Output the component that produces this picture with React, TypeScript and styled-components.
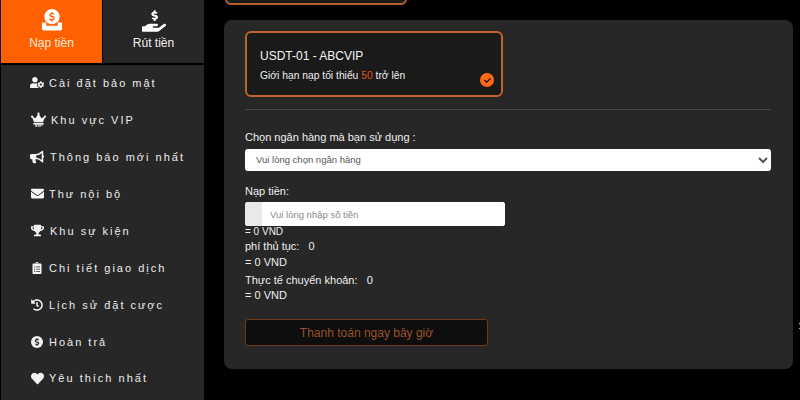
import React from "react";
import styled, { createGlobalStyle } from "styled-components";
import {
  FaBullhorn,
  FaCheck,
  FaClipboardList,
  FaCrown,
  FaDollarSign,
  FaEnvelope,
  FaHandHoldingUsd,
  FaHeart,
  FaHistory,
  FaTrophy,
  FaUserCog,
} from "react-icons/fa";

const GlobalStyle = createGlobalStyle`
  html, body {
    margin: 0;
    background: #000;
    overflow: hidden;
  }
  * {
    box-sizing: border-box;
  }
`;

const Page = styled.div`
  position: relative;
  width: 800px;
  height: 400px;
  display: flex;
  overflow: hidden;
  background: #000;
  color: #f2f2f2;
  font-family: "Liberation Sans", Arial, sans-serif;
`;

const Sidebar = styled.aside`
  width: 203px;
  margin-left: 1px;
  flex-shrink: 0;
  display: flex;
  flex-direction: column;
  gap: 2px;
`;

const Tabs = styled.div`
  height: 63px;
  display: flex;
  gap: 1px;
`;

const Tab = styled.div<{ $active?: boolean }>`
  flex: 1;
  display: flex;
  flex-direction: column;
  align-items: center;
  padding-top: 9px;
  gap: 5px;
  font-size: 12px;
  background: ${(p) => (p.$active ? "#ff6000" : "#272727")};
  color: ${(p) => (p.$active ? "#ffe9dc" : "#f2f2f2")};
`;

const TabIcon = styled.div`
  height: 22px;
  font-size: 24px;
  line-height: 0;
  color: #fff;
`;

const Menu = styled.nav`
  flex: 1;
  background: #272727;
`;

const MenuItem = styled.div<{ $gap?: number }>`
  height: 36.95px;
  display: flex;
  align-items: center;
  padding: 0 0 1px 29px;
  gap: ${(p) => p.$gap ?? 5}px;
  font-size: 11px;
  letter-spacing: 2px;
  color: #ececec;
  white-space: nowrap;
`;

const MenuIcon = styled.span`
  width: 14px;
  display: flex;
  justify-content: center;
  font-size: 13px;
  color: #f4f4f4;
`;

const Coin = styled.span`
  width: 12px;
  height: 12px;
  display: flex;
  align-items: center;
  justify-content: center;
  border-radius: 50%;
  background: #f4f4f4;
  color: #272727;
  font-size: 8px;
`;

const Crown = styled.span`
  width: 15px;
  margin-left: 1px;
  display: flex;
  flex-direction: column;
  align-items: center;
  font-size: 15px;
  line-height: 1;
  color: #f4f4f4;
`;

const CrownLabel = styled.span`
  font-size: 5px;
  font-weight: 700;
  letter-spacing: 0;
  margin-top: -3px;
`;

const Content = styled.main`
  flex: 1;
  display: flex;
  flex-direction: column;
  padding: 0 8px 0 20px;
`;

const ClippedCard = styled.div`
  width: 182px;
  height: 40px;
  margin: -35px 0 0 1px;
  flex-shrink: 0;
  background: #1a1a1a;
  border: 2px solid #b8602e;
  border-radius: 6px;
`;

const Panel = styled.section`
  margin-top: 15px;
  height: 349px;
  background: #272727;
  border-radius: 8px;
  padding: 11px 22px 0 21px;
  color: #f0f0f0;
`;

const BankCard = styled.div`
  position: relative;
  width: 258px;
  height: 66px;
  padding: 15px 13px 0;
  background: #1a1a1a;
  border: 2px solid #c0622c;
  border-radius: 6px;
`;

const BankName = styled.div`
  font-size: 12px;
  line-height: 17px;
  color: #f4f4f4;
`;

const BankLimit = styled.div`
  margin-top: 4px;
  font-size: 10.3px;
  line-height: 13px;
  color: #eee;
`;

const Accent = styled.span`
  color: #e0521c;
`;

const CheckBadge = styled.span`
  position: absolute;
  right: 7px;
  bottom: 8px;
  width: 14px;
  height: 14px;
  display: flex;
  align-items: center;
  justify-content: center;
  border-radius: 50%;
  background: #ff6a13;
  color: #2a1a10;
  font-size: 7px;
`;

const Divider = styled.hr`
  height: 1px;
  margin: 12px 0 0;
  border: 0;
  background: #474747;
`;

const FieldLabel = styled.div`
  margin-top: 20px;
  font-size: 11px;
  line-height: 14px;
`;

const BankSelect = styled.select`
  display: block;
  width: 526px;
  height: 22.5px;
  margin-top: 4.5px;
  padding: 0 0 0 7px;
  border: 0;
  border-radius: 3px;
  background: #fff;
  color: #555;
  font-family: inherit;
  font-size: 9.5px;
`;

const AmountLabel = styled(FieldLabel)`
  margin-top: 13px;
`;

const AmountGroup = styled.div`
  display: flex;
  width: 260px;
  height: 24px;
  margin-top: 4px;
  border-radius: 3px;
  overflow: hidden;
  background: #fff;
`;

const Addon = styled.span`
  width: 17px;
  background: #e9e9e9;
`;

const AmountInput = styled.input`
  flex: 1;
  min-width: 0;
  border: 0;
  outline: 0;
  padding: 0 8px;
  font-family: inherit;
  font-size: 9.5px;
  color: #333;

  &::placeholder {
    color: #8a8a8a;
    opacity: 1;
  }
`;

const Line = styled.div<{ $gap?: number; $small?: boolean }>`
  margin-top: ${(p) => p.$gap ?? 0}px;
  font-size: ${(p) => (p.$small ? 10 : 11)}px;
  line-height: ${(p) => (p.$small ? 12 : 14)}px;
  color: #efefef;
  white-space: pre;
`;

const PayButton = styled.button`
  display: block;
  width: 243px;
  height: 27px;
  margin-top: 17px;
  background: #0e0e0e;
  border: 1px solid #6e3a1e;
  border-radius: 3px;
  color: #9a5029;
  font-family: inherit;
  font-size: 12px;
`;

const EdgeMark = styled.span`
  position: absolute;
  right: -1px;
  top: 319px;
  font-size: 11px;
  color: #ddd;
`;

const DepositIcon = () => (
  <svg width="22" height="22" viewBox="0 0 22 23" fill="#fff">
    <path
      fillRule="evenodd"
      d="M11 0a8 8 0 1 1 0 16a8 8 0 1 1 0-16zM10.3 3v1.1c-1.3.2-2.2 1.1-2.2 2.3 0 1.4 1 1.9 2.2 2.2l.9.3c.8.2 1.1.5 1.1.9 0 .5-.5.9-1.3.9-.8 0-1.6-.4-2.2-.9l-.8 1.1c.6.6 1.3.9 2.1 1.1V13h1.4v-1.1c1.4-.2 2.3-1.1 2.3-2.4s-.9-1.9-2.2-2.3l-.9-.3c-.7-.2-1.1-.4-1.1-.8 0-.5.5-.8 1.1-.8.7 0 1.3.3 1.8.7l.8-1.1c-.6-.5-1.2-.8-1.9-.9V3z"
    />
    <path d="M1.5 14H5v3.5h12V14h3.5a1 1 0 0 1 1 1v6a1.5 1.5 0 0 1-1.5 1.5H2A1.5 1.5 0 0 1 .5 21v-6a1 1 0 0 1 1-1z" />
  </svg>
);

const menu = [
  { icon: <FaBullhorn size={14} />, label: "Thông báo mới nhất", gap: 6 },
  { icon: <FaEnvelope />, label: "Thư nội bộ", gap: 5 },
  { icon: <FaTrophy />, label: "Khu sự kiện", gap: 6 },
  { icon: <FaClipboardList size={12} />, label: "Chi tiết giao dịch" },
  { icon: <FaHistory size={12} />, label: "Lịch sử đặt cược" },
  {
    icon: (
      <Coin>
        <FaDollarSign />
      </Coin>
    ),
    label: "Hoàn trả",
  },
  { icon: <FaHeart />, label: "Yêu thích nhất" },
];

export default function App() {
  return (
    <Page>
      <GlobalStyle />
      <Sidebar>
        <Tabs>
          <Tab $active>
            <TabIcon>
              <DepositIcon />
            </TabIcon>
            Nạp tiền
          </Tab>
          <Tab>
            <TabIcon>
              <FaHandHoldingUsd />
            </TabIcon>
            Rút tiền
          </Tab>
        </Tabs>
        <Menu>
          <MenuItem>
            <MenuIcon>
              <FaUserCog size={15} />
            </MenuIcon>
            Cài đặt bảo mật
          </MenuItem>
          <MenuItem>
            <Crown>
              <FaCrown />
              <CrownLabel>VIP</CrownLabel>
            </Crown>
            Khu vực VIP
          </MenuItem>
          {menu.map((m) => (
            <MenuItem key={m.label} $gap={m.gap}>
              <MenuIcon>{m.icon}</MenuIcon>
              {m.label}
            </MenuItem>
          ))}
        </Menu>
      </Sidebar>
      <Content>
        <ClippedCard />
        <Panel>
          <BankCard>
            <BankName>USDT-01 - ABCVIP</BankName>
            <BankLimit>
              Giới hạn nạp tối thiểu <Accent>50</Accent> trở lên
            </BankLimit>
            <CheckBadge>
              <FaCheck />
            </CheckBadge>
          </BankCard>
          <Divider />
          <FieldLabel>Chọn ngân hàng mà bạn sử dụng :</FieldLabel>
          <BankSelect>
            <option>Vui lòng chọn ngân hàng</option>
          </BankSelect>
          <AmountLabel>Nạp tiền:</AmountLabel>
          <AmountGroup>
            <Addon />
            <AmountInput placeholder="Vui lòng nhập số tiền" />
          </AmountGroup>
          <Line $small>= 0 VND</Line>
          <Line $gap={1}>phí thủ tục:   0</Line>
          <Line $gap={2}>= 0 VND</Line>
          <Line $gap={4}>Thực tế chuyển khoản:   0</Line>
          <Line $gap={1}>= 0 VND</Line>
          <PayButton>Thanh toán ngay bây giờ</PayButton>
        </Panel>
      </Content>
      <EdgeMark>:</EdgeMark>
    </Page>
  );
}
